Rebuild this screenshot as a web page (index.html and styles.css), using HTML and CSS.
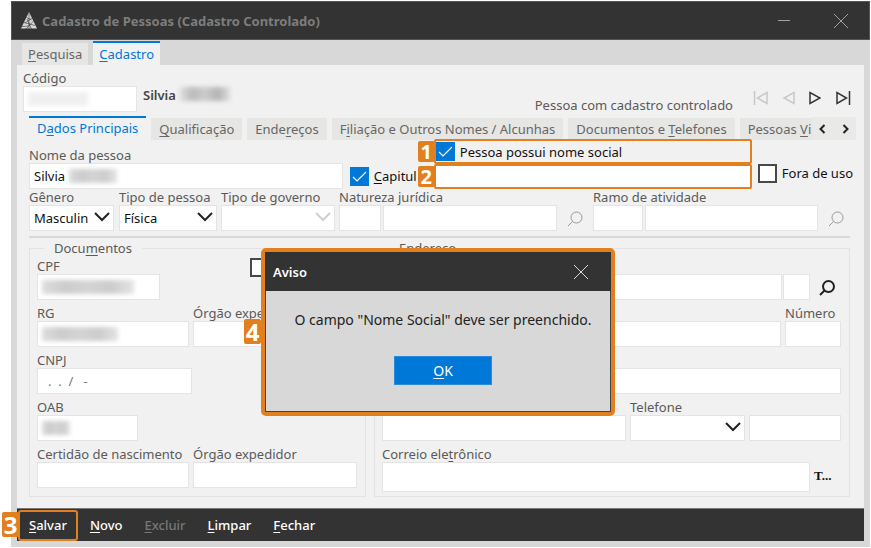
FILE: index.html
```html
<!DOCTYPE html>
<html lang="pt-BR">
<head>
    <meta charset="UTF-8">
    <meta name="viewport" content="width=device-width, initial-scale=1.0">
    <title>Cadastro de Pessoas</title>
    <link rel="stylesheet" href="styles.css">
</head>
<body>
    <div class="window">
        <header class="titlebar">
            <svg class="logo" width="16" height="17" viewBox="0 0 16 17">
                <path d="M8 0L16 16.500H0Z" fill="#d8d8d8" stroke="none"/>
                <path d="M8 1V17M5.500 5.500L10.500 8M11 6L4 11M3 10.500L14 13.500M12.500 9L5 17M6 7L10.500 17M1 14.500L8 14" stroke="#333" stroke-width="0.600" fill="none"/>
            </svg>
            <h1>Cadastro de Pessoas (Cadastro Controlado)</h1>
            <button class="win-btn" aria-label="Minimizar">
                <svg width="14" height="16" viewBox="0 0 14 16"><path d="M1 7.500H13"/></svg>
            </button>
            <button class="win-btn" aria-label="Fechar janela">
                <svg width="16" height="16" viewBox="0 0 16 16"><path d="M1 1L15 15M15 1L1 15"/></svg>
            </button>
        </header>

        <nav class="tabs main-tabs">
            <button class="tab"><u>P</u>esquisa</button>
            <button class="tab active"><u>C</u>adastro</button>
        </nav>

        <main class="panel">
            <section class="record">
                <div class="field code">
                    <label for="codigo">Código</label>
                    <div class="box"><input id="codigo" type="text"><span class="smudge light"></span></div>
                </div>
                <strong class="person">Silvia <span class="smudge"></span></strong>
                <span class="status">Pessoa com cadastro controlado</span>
                <div class="pager">
                    <button aria-label="Primeiro" disabled><svg width="16" height="14" viewBox="0 0 16 14"><path d="M1.500 0V14M14 1.500V12.500L4.500 7Z"/></svg></button>
                    <button aria-label="Anterior" disabled><svg width="12" height="14" viewBox="0 0 12 14"><path d="M11 1.500V12.500L1 7Z"/></svg></button>
                    <button aria-label="Próximo"><svg width="12" height="14" viewBox="0 0 12 14"><path d="M1 1.500V12.500L11 7Z"/></svg></button>
                    <button aria-label="Último"><svg width="16" height="14" viewBox="0 0 16 14"><path d="M14.500 0V14M2 1.500V12.500L11.500 7Z"/></svg></button>
                </div>
            </section>

            <nav class="tabs sub-tabs">
                <button class="tab active">D<u>a</u>dos Principais</button>
                <button class="tab"><u>Q</u>ualificação</button>
                <button class="tab">Ende<u>r</u>eços</button>
                <button class="tab">F<u>i</u>liação e Outros Nomes / Alcunhas</button>
                <button class="tab">Documentos e <u>T</u>elefones</button>
                <button class="tab cut">Pessoas <u>V</u>i</button>
                <span class="scroller">
                    <button aria-label="Abas anteriores"><svg width="7" height="10" viewBox="0 0 7 10"><path d="M5.500 1L1.500 5L5.500 9"/></svg></button>
                    <button aria-label="Próximas abas"><svg width="7" height="10" viewBox="0 0 7 10"><path d="M1.500 1L5.500 5L1.500 9"/></svg></button>
                </span>
            </nav>

            <section class="form">
                <div class="row name-row">
                    <div class="field grow">
                        <label for="nome">Nome da pessoa</label>
                        <div class="box"><input id="nome" type="text" value="Silvia"><span class="smudge after-name"></span></div>
                    </div>
                    <label class="check capital"><input type="checkbox" checked><span><u>C</u>apitul</span></label>
                    <div class="social">
                        <div class="mark">
                            <b class="badge">1</b>
                            <label class="check"><input type="checkbox" checked><span>Pessoa possui nome social</span></label>
                        </div>
                        <div class="mark">
                            <b class="badge">2</b>
                            <input type="text" aria-label="Nome social">
                        </div>
                    </div>
                    <label class="check unused"><input type="checkbox"><span>Fora de uso</span></label>
                </div>

                <div class="row type-row">
                    <div class="field gender">
                        <label for="genero">Gênero</label>
                        <div class="box">
                            <select id="genero"><option>Masculin</option></select>
                            <svg class="chevron" width="16" height="10" viewBox="0 0 16 10"><path d="M1 1L8 8L15 1"/></svg>
                        </div>
                    </div>
                    <div class="field kind">
                        <label for="tipo">Tipo de pessoa</label>
                        <div class="box">
                            <select id="tipo"><option>Física</option></select>
                            <svg class="chevron" width="16" height="10" viewBox="0 0 16 10"><path d="M1 1L8 8L15 1"/></svg>
                        </div>
                    </div>
                    <div class="field gov">
                        <label for="governo">Tipo de governo</label>
                        <div class="box">
                            <select id="governo" disabled><option></option></select>
                            <svg class="chevron" width="16" height="10" viewBox="0 0 16 10"><path d="M1 1L8 8L15 1"/></svg>
                        </div>
                    </div>
                    <div class="field lookup nature">
                        <label for="natureza">Natureza jurídica</label>
                        <div class="row">
                            <input id="natureza" class="short" type="text">
                            <input type="text" aria-label="Descrição da natureza jurídica">
                            <button class="search" aria-label="Buscar natureza jurídica" disabled><svg width="16" height="16" viewBox="0 0 16 16"><circle cx="9.500" cy="6.500" r="5.500"/><path d="M5.500 10.500L1 15"/></svg></button>
                        </div>
                    </div>
                    <div class="field lookup activity">
                        <label for="ramo">Ramo de atividade</label>
                        <div class="row">
                            <input id="ramo" class="short" type="text">
                            <input type="text" aria-label="Descrição do ramo de atividade">
                            <button class="search" aria-label="Buscar ramo de atividade" disabled><svg width="16" height="16" viewBox="0 0 16 16"><circle cx="9.500" cy="6.500" r="5.500"/><path d="M5.500 10.500L1 15"/></svg></button>
                        </div>
                    </div>
                </div>

                <hr>

                <div class="groups">
                    <fieldset class="docs">
                        <legend>Docu<u>m</u>entos</legend>
                        <div class="row">
                            <div class="field w-cpf">
                                <label for="cpf">CPF</label>
                                <div class="box"><input id="cpf" type="text"><span class="smudge wide"></span></div>
                            </div>
                            <input class="foreign" type="checkbox" aria-label="Estrangeiro">
                        </div>
                        <div class="row">
                            <div class="field w-rg">
                                <label for="rg">RG</label>
                                <div class="box"><input id="rg" type="text"><span class="smudge"></span></div>
                            </div>
                            <div class="field grow">
                                <label for="orgao-rg">Órgão expedidor</label>
                                <input id="orgao-rg" type="text">
                            </div>
                        </div>
                        <div class="row">
                            <div class="field w-cnpj">
                                <label for="cnpj">CNPJ</label>
                                <input id="cnpj" class="mask" type="text" value=".  .  /   -">
                            </div>
                        </div>
                        <div class="row">
                            <div class="field w-oab">
                                <label for="oab">OAB</label>
                                <div class="box"><input id="oab" type="text"><span class="smudge small"></span></div>
                            </div>
                        </div>
                        <div class="row">
                            <div class="field w-rg">
                                <label for="certidao">Certidão de nascimento</label>
                                <input id="certidao" type="text">
                            </div>
                            <div class="field grow">
                                <label for="orgao-cert">Órgão expedidor</label>
                                <input id="orgao-cert" type="text">
                            </div>
                        </div>
                    </fieldset>

                    <fieldset class="address">
                        <legend>Endereço</legend>
                        <div class="row tight">
                            <input class="grow" type="text" aria-label="Cidade">
                            <input class="uf" type="text" aria-label="UF">
                            <button class="search" aria-label="Buscar endereço"><svg width="16" height="16" viewBox="0 0 16 16"><circle cx="9.500" cy="6.500" r="5.500"/><path d="M5.500 10.500L1 15"/></svg></button>
                        </div>
                        <div class="row">
                            <input class="grow" type="text" aria-label="Logradouro">
                            <div class="field number">
                                <label for="numero">Número</label>
                                <input id="numero" type="text">
                            </div>
                        </div>
                        <div class="row">
                            <input class="grow" type="text" aria-label="Complemento">
                        </div>
                        <div class="row">
                            <input class="grow" type="text" aria-label="Bairro">
                            <div class="field phone">
                                <label for="telefone">Telefone</label>
                                <div class="box">
                                    <select id="telefone"><option></option></select>
                                    <svg class="chevron" width="16" height="10" viewBox="0 0 16 10"><path d="M1 1L8 8L15 1"/></svg>
                                </div>
                            </div>
                            <input class="phone-number" type="text" aria-label="Número do telefone">
                        </div>
                        <div class="row">
                            <div class="field grow">
                                <label for="email">Correio ele<u>t</u>rônico</label>
                                <input id="email" class="tall" type="email">
                            </div>
                            <button class="more">T...</button>
                        </div>
                    </fieldset>
                </div>
            </section>
        </main>

        <footer class="toolbar">
            <div class="save">
                <b class="badge big">3</b>
                <button><u>S</u>alvar</button>
            </div>
            <button><u>N</u>ovo</button>
            <button disabled><u>E</u>xcluir</button>
            <button><u>L</u>impar</button>
            <button><u>F</u>echar</button>
        </footer>

        <div class="overlay">
            <div class="dialog" role="dialog" aria-labelledby="aviso">
                <b class="badge big">4</b>
                <div class="dialog-head">
                    <h2 id="aviso">Aviso</h2>
                    <button class="win-btn" aria-label="Fechar aviso">
                        <svg width="16" height="16" viewBox="0 0 16 16"><path d="M1 1L15 15M15 1L1 15"/></svg>
                    </button>
                </div>
                <div class="dialog-body">
                    <p>O campo "Nome Social" deve ser preenchido.</p>
                    <button class="ok"><u>O</u>K</button>
                </div>
            </div>
        </div>
    </div>
</body>
</html>
```
FILE: styles.css
```css
* {
    box-sizing: border-box;
}
body {
    margin: 0;
    padding: 1px 1px 1px 11px;
    background-color: #fff;
    font-family: 'Noto Sans', 'Open Sans', sans-serif;
    font-size: 13px;
    line-height: 16px;
    color: #5a5a5a;
}
button, input, select {
    font: inherit;
    color: inherit;
    margin: 0;
}
button {
    border: none;
    background: none;
    padding: 0;
    white-space: nowrap;
}
svg {
    display: block;
    fill: none;
    stroke: currentColor;
}
u {
    text-underline-offset: 2px;
}
.window {
    position: relative;
    background-color: #d8d8d8;
    padding-bottom: 6px;
}

/* title bar */
.titlebar {
    display: flex;
    align-items: center;
    height: 39px;
    padding: 0 20px 0 9px;
    background-color: #333;
    border: 1px solid #555;
    color: #7d7d7d;
}
.titlebar h1 {
    flex: 1;
    margin: 0 0 0 5px;
    font-size: 13px;
    font-weight: 700;
}
.win-btn {
    color: #a0a0a0;
}
.titlebar .win-btn + .win-btn {
    margin-left: 42px;
}

/* tabs */
.tabs {
    display: flex;
    gap: 5px;
    align-items: flex-end;
}
.tab {
    height: 22px;
    padding: 0 7px;
    background-color: #e6e6e4;
    color: #666;
}
.tab.active {
    height: 24px;
    padding-bottom: 3px;
    background-color: #f1f1f1;
    border-top: 2px solid #0078d7;
    color: #0078d7;
}
.main-tabs {
    height: 25px;
    padding-left: 11px;
}
.main-tabs .tab {
    padding: 0 6px;
}
.sub-tabs {
    height: 24px;
    padding: 0 8px 0 12px;
}
.sub-tabs .tab.cut {
    flex: 1;
    min-width: 0;
    overflow: hidden;
    text-align: left;
}
.sub-tabs .tab {
    padding: 0 8px;
}
.sub-tabs .tab.active {
    padding: 0 8px 3px;
}
.scroller {
    display: flex;
    align-items: center;
    gap: 16px;
    height: 23px;
    margin-left: -5px;
    padding: 0 7px;
    background-color: #e9e9e8;
    color: #222;
    stroke-width: 2;
}

.panel {
    margin: 0 6px;
    padding-bottom: 11px;
    background-color: #f1f1f1;
}

/* record header */
.record {
    display: flex;
    height: 51px;
    padding: 5px 13px 0 6px;
}
.code {
    width: 114px;
}
.person {
    display: flex;
    flex: 1;
    gap: 4px;
    margin: 17px 0 0 6px;
    color: #444;
    font-weight: 600;
}
.status {
    align-self: flex-end;
    margin: 0 20px 3px 0;
}
.pager {
    display: flex;
    align-items: center;
    gap: 14px;
    padding-top: 10px;
    color: #333;
    stroke-width: 1.500;
}
.pager button:disabled {
    color: #c8c8c8;
}

/* fields */
.row {
    display: flex;
    align-items: flex-end;
    gap: 4px;
}
.row.tight {
    gap: 1px;
}
.field label {
    display: block;
    white-space: nowrap;
}
.grow {
    flex: 1;
    min-width: 0;
}
.box {
    position: relative;
}
input[type="text"], input[type="email"], select {
    display: block;
    width: 100%;
    min-width: 0;
    height: 26px;
    padding: 0 4px;
    background-color: #fff;
    border: 1px solid #e4e4e4;
    border-radius: 0;
    color: #111;
    appearance: none;
}
select {
    opacity: 1;
}
.chevron {
    position: absolute;
    top: 7px;
    right: 4px;
    color: #222;
    stroke-width: 2;
    pointer-events: none;
}
select:disabled + .chevron {
    color: #d0d0d0;
}
input[type="checkbox"] {
    flex: none;
    display: block;
    width: 19px;
    height: 19px;
    background-color: #fff;
    border: 2px solid #484848;
    appearance: none;
}
input[type="checkbox"]:checked {
    border: none;
    background: #0078d7 url("data:image/svg+xml,%3Csvg xmlns='http://www.w3.org/2000/svg' viewBox='0 0 19 19'%3E%3Cpath d='M3 10L7 14L16 5' fill='none' stroke='%23fff' stroke-width='1.200'/%3E%3C/svg%3E") center / 100%;
}
.check {
    display: flex;
    align-items: center;
    gap: 5px;
    color: #111;
    white-space: nowrap;
}
.search {
    flex: none;
    width: 30px;
    height: 26px;
    padding: 2px 6px 0 8px;
    color: #222;
    stroke-width: 2;
}
.search:disabled {
    color: #999;
    stroke-width: 1;
}

/* hidden personal data */
.smudge {
    width: 50px;
    height: 14px;
    background: linear-gradient(90deg, #ddd, #bbb, #ccc, #b4b4b4, #ddd);
    filter: blur(2px);
}
.box .smudge {
    position: absolute;
    top: 6px;
    left: 5px;
    width: 76px;
    background: linear-gradient(90deg, #ddd, #ccc, #d4d4d4, #ccc, #e4e4e4);
}
.box .smudge.light {
    width: 60px;
    background: #f0f0f0;
}
.box .smudge.after-name {
    left: 40px;
    width: 48px;
}
.box .smudge.wide {
    width: 92px;
}
.box .smudge.small {
    width: 28px;
}

/* form */
.form {
    padding: 0 14px 0 12px;
}
.name-row {
    height: 49px;
    gap: 0;
}
.capital {
    height: 26px;
    width: 84px;
    margin-left: 7px;
}
.social {
    width: 318px;
}
.mark {
    position: relative;
    height: 25px;
    border: 2px solid #e27f1e;
    border-radius: 2px;
}
.mark input[type="text"] {
    height: 21px;
    border: none;
}
.mark .check {
    margin-top: 1px;
}
.badge {
    position: absolute;
    top: 0;
    left: -18px;
    width: 17px;
    height: 21px;
    border-radius: 2px;
    background-color: #e27f1e;
    color: #fff;
    font-size: 20px;
    line-height: 21px;
    text-align: center;
}
.badge.big {
    height: 25px;
    font-size: 24px;
    line-height: 25px;
}
.unused {
    height: 32px;
    margin: 0 -3px 0 6px;
}
.type-row {
    align-items: flex-start;
}
.gender {
    width: 85px;
    margin-right: 1px;
}
.kind {
    width: 98px;
}
.gov {
    width: 114px;
}
.lookup {
    flex: 36;
}
.activity {
    flex: 37;
}
.lookup .row {
    gap: 2px;
}
.lookup .short {
    width: 50px;
    flex: none;
}
.nature .short {
    width: 42px;
}
hr {
    height: 2px;
    margin: 5px 0 2px;
    border: none;
    background-color: #d8d8d8;
}

/* groups */
.groups {
    display: grid;
    grid-template-columns: 337fr 476fr;
    gap: 8px;
}
fieldset {
    display: flex;
    flex-direction: column;
    gap: 5px;
    min-width: 0;
    margin: 0;
    padding: 2px 8px 4px 7px;
    border: 1px solid #e2e2e2;
}
legend {
    margin-left: 7px;
    padding: 0 10px;
}
fieldset .row {
    min-height: 42px;
}
.w-cpf {
    width: 123px;
}
.w-rg {
    width: 152px;
}
.w-cnpj {
    width: 155px;
}
.w-oab {
    width: 101px;
}
.foreign {
    align-self: flex-start;
    margin-left: 86px;
}
.docs .foreign {
    margin-bottom: 23px;
    align-self: flex-end;
}
input.mask {
    padding-left: 10px;
    white-space: pre;
    color: #777;
}
.uf, .number {
    flex: none;
}
input[type="text"].uf {
    width: 27px;
}
.number {
    width: 56px;
}
.phone {
    width: 115px;
}
input[type="text"].phone-number {
    flex: none;
    width: 92px;
}
input[type="email"].tall {
    height: 30px;
}
.more {
    width: 27px;
    padding-bottom: 8px;
    font-family: 'Liberation Serif', serif;
    font-weight: 700;
    text-align: left;
    color: #111;
}

/* toolbar */
.toolbar {
    display: flex;
    align-items: center;
    gap: 22px;
    height: 33px;
    margin: 0 6px;
    padding-left: 1px;
    background-color: #333;
    border-top: 1px solid #777;
    color: #fff;
    font-weight: 500;
}
.toolbar button:disabled {
    color: #777;
}
.save {
    position: relative;
    margin-right: -10px;
    padding: 5px 9px 6px;
    border: 2px solid #e27f1e;
    border-radius: 3px;
}

/* warning dialog */
.overlay {
    position: absolute;
    inset: 0;
    display: flex;
    justify-content: center;
    align-items: flex-start;
    padding: 247px 5px 0 0;
}
.dialog {
    position: relative;
    width: 354px;
    border: 4px solid #e27f1e;
    border-radius: 5px;
    background-color: #d8d8d8;
    color: #222;
}
.dialog .badge {
    top: 67px;
    left: -21px;
}
.dialog-head {
    display: flex;
    align-items: center;
    justify-content: space-between;
    height: 39px;
    padding: 0 22px 0 8px;
    background-color: #333;
    color: #fff;
}
.dialog-head h2 {
    margin: 0;
    font-size: 13px;
    font-weight: 600;
}
.dialog-head .win-btn {
    color: #ddd;
}
.dialog-body {
    padding: 21px 0 26px 10px;
    border: 1px solid #444;
    border-top: none;
    text-align: center;
    font-size: 14px;
}
.dialog-body p {
    margin: 0 0 28px;
}
.ok {
    width: 98px;
    height: 29px;
    background-color: #0078d7;
    border: 1px solid #2b8ade;
    color: #fff;
}
```
